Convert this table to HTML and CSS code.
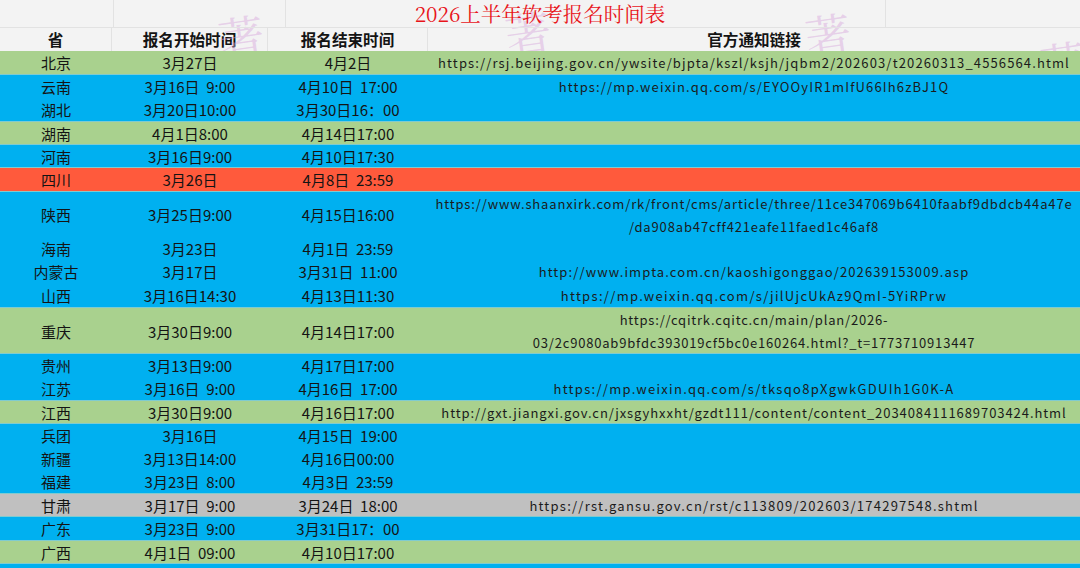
FILE: index.html
```html
<!DOCTYPE html>
<html lang="zh-CN">
<head>
<meta charset="utf-8">
<title>2026上半年软考报名时间表</title>
<link rel="stylesheet" href="styles.css">
</head>
<body>
<div class="sheet">
  <div class="top">
    <span class="wm wm1">著</span>
    <span class="wm wm2">著</span>
    <span class="wm wm3">著</span>
    <span class="wm wm4">著</span>
    <div class="title-row">
      <div class="gl"></div><div class="gl"></div><div class="gl"></div>
      <div class="title">2026上半年软考报名时间表</div>
    </div>
    <div class="row head">
      <div class="c">省</div>
      <div class="c">报名开始时间</div>
      <div class="c">报名结束时间</div>
      <div class="c">官方通知链接</div>
    </div>
  </div>

  <div class="row green">
    <div class="c">北京</div><div class="c">3月27日</div><div class="c">4月2日</div>
    <div class="c url u1">https://rsj.beijing.gov.cn/ywsite/bjpta/kszl/ksjh/jqbm2/202603/t20260313_4556564.html</div>
  </div>
  <div class="row blue sep">
    <div class="c">云南</div><div class="c">3月16日&nbsp; 9:00</div><div class="c">4月10日&nbsp; 17:00</div>
    <div class="c url u2">https://mp.weixin.qq.com/s/EYOOyIR1mIfU66Ih6zBJ1Q</div>
  </div>
  <div class="row blue">
    <div class="c">湖北</div><div class="c">3月20日10:00</div><div class="c">3月30日16：00</div><div class="c"></div>
  </div>
  <div class="row green sep">
    <div class="c">湖南</div><div class="c">4月1日8:00</div><div class="c">4月14日17:00</div><div class="c"></div>
  </div>
  <div class="row blue sep">
    <div class="c">河南</div><div class="c">3月16日9:00</div><div class="c">4月10日17:30</div><div class="c"></div>
  </div>
  <div class="row red sep">
    <div class="c">四川</div><div class="c">3月26日</div><div class="c">4月8日&nbsp; 23:59</div><div class="c"></div>
  </div>
  <div class="row blue sep tall">
    <div class="c">陕西</div><div class="c">3月25日9:00</div><div class="c">4月15日16:00</div>
    <div class="c url u3">https://www.shaanxirk.com/rk/front/cms/article/three/11ce347069b6410faabf9dbdcb44a47e<br>/da908ab47cff421eafe11faed1c46af8</div>
  </div>
  <div class="row blue">
    <div class="c">海南</div><div class="c">3月23日</div><div class="c">4月1日&nbsp; 23:59</div><div class="c"></div>
  </div>
  <div class="row blue">
    <div class="c">内蒙古</div><div class="c">3月17日</div><div class="c">3月31日&nbsp; 11:00</div>
    <div class="c url u4">http://www.impta.com.cn/kaoshigonggao/202639153009.asp</div>
  </div>
  <div class="row blue">
    <div class="c">山西</div><div class="c">3月16日14:30</div><div class="c">4月13日11:30</div>
    <div class="c url u5">https://mp.weixin.qq.com/s/jilUjcUkAz9QmI-5YiRPrw</div>
  </div>
  <div class="row green sep tall">
    <div class="c">重庆</div><div class="c">3月30日9:00</div><div class="c">4月14日17:00</div>
    <div class="c url u6">https://cqitrk.cqitc.cn/main/plan/2026-<br>03/2c9080ab9bfdc393019cf5bc0e160264.html?_t=1773710913447</div>
  </div>
  <div class="row blue sep">
    <div class="c">贵州</div><div class="c">3月13日9:00</div><div class="c">4月17日17:00</div><div class="c"></div>
  </div>
  <div class="row blue">
    <div class="c">江苏</div><div class="c">3月16日&nbsp; 9:00</div><div class="c">4月16日&nbsp; 17:00</div>
    <div class="c url u7">https://mp.weixin.qq.com/s/tksqo8pXgwkGDUIh1G0K-A</div>
  </div>
  <div class="row green sep">
    <div class="c">江西</div><div class="c">3月30日9:00</div><div class="c">4月16日17:00</div>
    <div class="c url u8">http://gxt.jiangxi.gov.cn/jxsgyhxxht/gzdt111/content/content_2034084111689703424.html</div>
  </div>
  <div class="row blue sep">
    <div class="c">兵团</div><div class="c">3月16日</div><div class="c">4月15日&nbsp; 19:00</div><div class="c"></div>
  </div>
  <div class="row blue">
    <div class="c">新疆</div><div class="c">3月13日14:00</div><div class="c">4月16日00:00</div><div class="c"></div>
  </div>
  <div class="row blue">
    <div class="c">福建</div><div class="c">3月23日&nbsp; 8:00</div><div class="c">4月3日&nbsp; 23:59</div><div class="c"></div>
  </div>
  <div class="row grey sep">
    <div class="c">甘肃</div><div class="c">3月17日&nbsp; 9:00</div><div class="c">3月24日&nbsp; 18:00</div>
    <div class="c url u9">https://rst.gansu.gov.cn/rst/c113809/202603/174297548.shtml</div>
  </div>
  <div class="row blue sep">
    <div class="c">广东</div><div class="c">3月23日&nbsp; 9:00</div><div class="c">3月31日17：00</div><div class="c"></div>
  </div>
  <div class="row green sep">
    <div class="c">广西</div><div class="c">4月1日&nbsp; 09:00</div><div class="c">4月10日17:00</div><div class="c"></div>
  </div>
  <div class="row blue sep tail"></div>
</div>
</body>
</html>
```

FILE: styles.css
```css
html, body {
  margin: 0;
  padding: 0;
  background: #00b0f0;
}
body {
  width: 1080px;
  height: 568px;
  overflow: hidden;
  font-family: "Noto Sans CJK SC", "Noto Sans", sans-serif;
  color: #141414;
}
.sheet {
  display: flex;
  flex-direction: column;
}
.top {
  position: relative;
  overflow: hidden;
  background: #f3f3f3;
  flex-shrink: 0;
}
.wm {
  position: absolute;
  font-family: "Noto Serif CJK SC", "Noto Sans CJK SC", serif;
  font-size: 46px;
  line-height: 1;
  color: rgba(214, 165, 220, 0.45);
  font-weight: 400;
  transform: rotate(-8deg);
}
.wm1 { left: 218px; top: 12px; }
.wm2 { left: 505px; top: 8px; }
.wm3 { left: 805px; top: 10px; }
.wm4 { left: 1040px; top: 38px; }
.title-row {
  height: 28px;
  position: relative;
  display: grid;
  grid-template-columns: 114px 172px 600px 1fr;
  border-bottom: 1px solid #e2e2e2;
  box-sizing: border-box;
}
.gl {
  border-right: 1px solid #e2e2e2;
}
.title {
  position: absolute;
  left: 0;
  right: 0;
  top: -1px;
  height: 28px;
  line-height: 28px;
  text-align: center;
  color: #e8141a;
  font-family: "Noto Serif CJK SC", "Noto Sans CJK SC", serif;
  font-size: 20.5px;
}
.row {
  display: grid;
  grid-template-columns: 112px 156px 160px 1fr;
  height: 23.27px;
  box-sizing: border-box;
  flex-shrink: 0;
}
.row.tall { height: 46.54px; }
.row.head {
  height: 23px;
  font-weight: 700;
  font-size: 15.6px;
}
.row.head .c { border-right: 1px solid #e2e2e2; font-size: 15.6px; }
.row.head .c:last-child { border-right: none; }
.c {
  display: flex;
  align-items: center;
  justify-content: center;
  font-size: 15px;
  white-space: nowrap;
  text-align: center;
  line-height: 23.27px;
}
.url {
  font-size: 13px;
  letter-spacing: 1.1px;
  color: #1b1b1b;
}
.u1 { letter-spacing: 1.12px; }
.u2 { letter-spacing: 1.15px; }
.u3 { letter-spacing: 0.86px; }
.u4 { letter-spacing: 1.11px; }
.u5 { letter-spacing: 1.32px; }
.u6 { letter-spacing: 0.8px; }
.u7 { letter-spacing: 1.29px; }
.u8 { letter-spacing: 0.93px; }
.u9 { letter-spacing: 1.24px; }
.green { background: #a9d18e; }
.blue { background: #00b0f0; }
.red { background: #ff5a3c; }
.grey { background: #c0c0c0; }
.sep { border-top: 1px solid #7fcbd0; }
.row.tail { height: 12px; }
```
